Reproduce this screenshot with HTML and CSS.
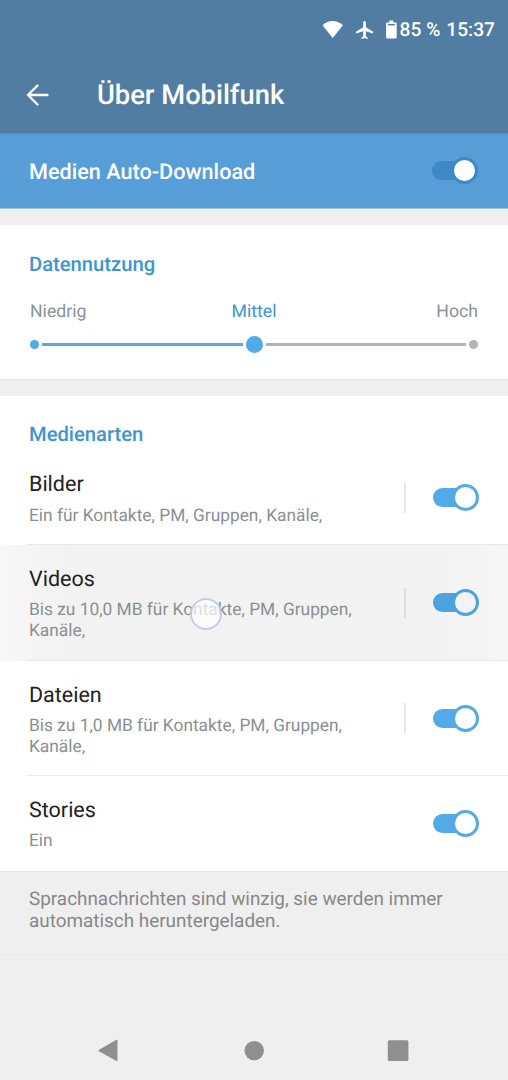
FILE: index.html
```html
<!DOCTYPE html>
<html lang="de">
<head>
<meta charset="utf-8">
<title>Über Mobilfunk</title>
<link rel="stylesheet" href="styles.css">
</head>
<body>
<div class="screen">
  <header class="top">
    <div class="status">
      <svg class="wifi" width="22" height="18" viewBox="0 0 22 18"><path d="M.5 4.200Q10.700-4.200 20.900 4.200L10.700 17Z"/></svg>
      <svg class="plane" width="18" height="18" viewBox="2 2 20 20"><path d="M21 16v-2l-8-5V3.500c0-.83-.67-1.500-1.500-1.500S10 2.670 10 3.500V9l-8 5v2l8-2.500V19l-2 1.500V22l3.500-1 3.500 1v-1.500L13 19v-5.500l8 2.500z"/></svg>
      <svg class="battery" width="11" height="19" viewBox="0 0 11 19"><path d="M3.300.5h4v2h2.200q1.200 0 1.200 1.200v13.600q0 1.200-1.200 1.200h-8.200q-1.200 0-1.200-1.200V3.700q0-1.200 1.200-1.200h2z"/><path class="battery-gap" d="M2 3.900h6.800v1.500H2z"/></svg>
      <span class="percent">85 %</span>
      <span class="clock">15:37</span>
    </div>
    <div class="toolbar">
      <svg class="back" width="24" height="24" viewBox="0 0 24 24"><path d="M21.500 12H2M11.500 2.500L2 12l9.500 9.500"/></svg>
      <h1 class="title">Über Mobilfunk</h1>
    </div>
  </header>
  <div class="master">
    <span class="master-label">Medien Auto-Download</span>
    <span class="switch switch-master"><span class="track"></span><span class="thumb"></span></span>
  </div>
  <section class="card usage">
    <h2 class="heading">Datennutzung</h2>
    <div class="levels"><span>Niedrig</span><span class="active">Mittel</span><span>Hoch</span></div>
    <div class="slider"><i class="dot"></i><i class="line"></i><i class="knob"></i><i class="line off"></i><i class="dot off"></i></div>
  </section>
  <section class="card media">
    <h2 class="heading">Medienarten</h2>
    <div class="row row-images">
      <div class="copy"><div class="name">Bilder</div><div class="detail">Ein für Kontakte, PM, Gruppen, Kanäle,</div></div>
      <span class="separator"></span>
      <span class="switch"><span class="track"></span><span class="thumb"></span></span>
    </div>
    <div class="row tall pressed">
      <div class="copy"><div class="name">Videos</div><div class="detail">Bis zu 10,0 MB für Kontakte, PM, Gruppen,<br>Kanäle,</div></div>
      <span class="separator"></span>
      <span class="switch"><span class="track"></span><span class="thumb"></span></span>
      <span class="touch"></span>
    </div>
    <div class="row tall">
      <div class="copy"><div class="name">Dateien</div><div class="detail">Bis zu 1,0 MB für Kontakte, PM, Gruppen,<br>Kanäle,</div></div>
      <span class="separator"></span>
      <span class="switch"><span class="track"></span><span class="thumb"></span></span>
    </div>
    <div class="row row-stories">
      <div class="copy"><div class="name">Stories</div><div class="detail">Ein</div></div>
      <span class="switch"><span class="track"></span><span class="thumb"></span></span>
    </div>
  </section>
  <p class="note">Sprachnachrichten sind winzig, sie werden immer<br>automatisch heruntergeladen.</p>
  <nav class="nav">
    <svg width="22" height="24" viewBox="0 0 22 24"><path d="M2 11.700L19 1.900Q20.500 1.200 20.500 2.800V21.800Q20.500 23.500 19 22.700L2 13.300Q.7 12.500 2 11.700Z"/></svg>
    <svg width="22" height="24" viewBox="0 0 22 24"><circle cx="12.200" cy="12.600" r="9.700"/></svg>
    <svg width="22" height="24" viewBox="0 0 22 24"><rect x=".8" y="2.200" width="20.600" height="20.800" rx="1.500"/></svg>
  </nav>
</div>
</body>
</html>
```
FILE: styles.css
```css
* { box-sizing: border-box; }
body { margin: 0; background: #efefef; font-family: Roboto, sans-serif; text-rendering: geometricPrecision; }
.screen { width: 508px; height: 1080px; display: flex; flex-direction: column; background: #efefef; overflow: hidden; }
svg { display: block; flex: none; }
h1, h2, p { margin: 0; }
.top { height: 133px; background: #527da3; color: #fff; }
.status { height: 57px; padding: 2px 13px 0 0; display: flex; align-items: center; justify-content: flex-end; font-size: 19.200px; font-weight: 500; fill: #fff; white-space: nowrap; }
.wifi { margin-right: 12px; }
.plane { margin-right: 12px; }
.battery { margin-right: 3px; }
.battery-gap { fill: #527da3; }
.percent { margin-right: 6px; }
.toolbar { height: 76px; padding-left: 26px; display: flex; align-items: center; }
.back { fill: none; stroke: #fff; stroke-width: 2.300; stroke-linecap: round; stroke-linejoin: round; margin-right: 47px; }
.title { font-size: 27.300px; line-height: 34px; font-weight: 500; }
.master { height: 76px; padding: 2px 31px 0 29px; display: flex; align-items: center; justify-content: space-between; background: linear-gradient(#508fc6, #579dd8 3px); color: #fff; border-bottom: 1px solid #9cc3e5; }
.master-label { padding-top: 2px; font-size: 21.650px; font-weight: 500; }
.card { background: #fff; }
.usage { height: 155px; margin-top: 16px; padding: 26px 30px 0 29px; border-bottom: 1px solid #e4e4e4; }
.heading { font-size: 20.200px; line-height: 26px; font-weight: 500; color: #3d95d4; }
.levels { display: grid; grid-template-columns: 1fr 1fr 1fr; margin: 23px 0 0 1px; font-size: 17.700px; line-height: 24px; color: #89929c; }
.levels .active { text-align: center; color: #3d95d4; }
.levels span:last-child { text-align: right; }
.slider { height: 18px; margin: 11px 0 0; display: flex; align-items: center; }
.dot { width: 9px; height: 9px; margin-left: 1px; border-radius: 50%; background: #52abe8; }
.dot.off { margin-left: 0; }
.knob { width: 17px; height: 17px; border-radius: 50%; background: #52abe8; }
.line { flex: 1; height: 3px; margin: 0 3px; background: #52abe8; }
.off { background: #afb4b9; }
.media { height: 476px; margin-top: 16px; padding-top: 25px; border-bottom: 1px solid #e4e4e4; }
.media .heading { padding-left: 29px; }
.row { position: relative; display: flex; align-items: center; padding: 0 30px 0 29px; }
.row:not(:last-child)::after { content: ""; position: absolute; left: 27px; right: 0; bottom: 0; height: 1px; background: #e8e8e8; }
.row-images { height: 94px; margin-top: 4px; }
.tall { height: 115.500px; }
.row-stories { height: 95px; }
.pressed { background: linear-gradient(90deg, #f7f7f7, #f2f2f2 70px, #f2f2f2 440px, #f6f6f6); }
.copy { flex: 1; align-self: flex-start; padding-top: 20px; white-space: nowrap; }
.tall .copy { padding-top: 21px; }
.tall:not(.pressed) .copy { padding-top: 21.500px; }
.row-stories .copy { padding-top: 21px; }
.name { font-size: 21.500px; line-height: 28px; color: #222; }
.detail { margin-top: 6px; font-size: 17.330px; line-height: 21px; color: #8a8f93; }
.row-images .detail { margin-top: 7px; }
.separator { width: 2px; height: 30px; margin-right: 27px; background: #e8e8e8; }
.pressed .separator { background: #dedede; }
.switch { position: relative; flex: none; width: 45px; height: 27px; display: flex; align-items: center; }
.track { width: 37px; height: 19px; border-radius: 10px; background: #52abe8; }
.thumb { position: absolute; right: -1px; top: 0; width: 27px; height: 27px; border: 3px solid #52abe8; border-radius: 50%; background: #fff; }
.row-images .switch { translate: 0 -1px; }
.pressed .track { background: #4da3dd; }
.pressed .thumb { border-color: #4da3dd; background: #f3f3f3; }
.switch-master { translate: 0 -1px; }
.switch-master .track { background: #3e89c7; }
.switch-master .thumb { border-color: #3e89c7; }
.touch { position: absolute; left: 190px; top: 53px; width: 32px; height: 32px; border: 2px solid rgba(184,192,228,.8); border-radius: 50%; background: rgba(255,255,255,.7); }
.note { height: 83px; padding: 16px 29px 0; font-size: 18.900px; line-height: 22px; color: #888; border-bottom: 1px solid #ebebeb; white-space: nowrap; }
.nav { height: 60px; margin-top: auto; padding: 0 99px 0 97px; display: flex; align-items: center; justify-content: space-between; fill: #8f8f8f; }
```
